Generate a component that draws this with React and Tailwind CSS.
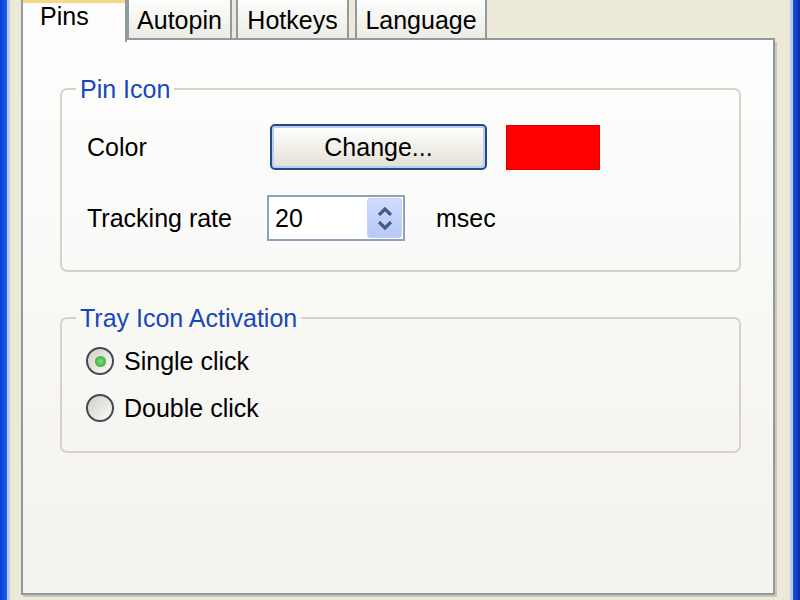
import React, { useState } from "react";

const font = { fontFamily: '"Liberation Sans", Arial, sans-serif' };

const Radio = ({ checked, label, onClick }) => (
    <div className="flex items-center h-[34px] cursor-default" onClick={onClick}>
        <span className="w-[28px] h-[28px] rounded-full border-2 border-[#3f4a55] bg-linear-to-br from-[#cfcec6] to-[#fdfdfb] flex items-center justify-center">
            {checked && <span className="w-[11px] h-[11px] rounded-full bg-radial from-[#7de07a] to-[#1f9b1f]" />}
        </span>
        <span className="ml-[10px] text-[25px] leading-none text-black">{label}</span>
    </div>
);

const App = () => {
    const [mode, setMode] = useState("single");
    const [rate, setRate] = useState(20);

    return (
        <div className="w-[800px] h-[600px] flex bg-[#ece9d8] overflow-hidden" style={font}>
            {/* window frame left */}
            <div className="w-[7px] h-full bg-linear-to-r from-[#0a3ad0] to-[#1660ea]" />
            <div className="w-[3px] h-full bg-[#b7cbf2]" />
            <div className="w-[11px] h-full" />

            {/* tab control */}
            <div className="w-[754px] h-full flex flex-col">
                <div className="h-[40px] flex">
                    <div className="w-[106px] h-[42px] relative z-10 border-x-2 border-[#919b9c] bg-[#fdfdfd] pl-[17px]">
                        <div className="absolute top-0 left-0 right-0 h-[3px] bg-[#f6d889]" />
                        <div className="pt-[2px] text-[25px] leading-[28px] text-black">Pins</div>
                    </div>
                    <div className="flex-1 flex items-end border-b-2 border-[#919b9c] h-[40px]">
                        <div className="w-[105px] h-[38px] border-x-2 border-[#919b9c] bg-linear-to-b from-[#fdfdfc] to-[#ecebe5] flex items-center justify-center pt-[2px] text-[25px] leading-none text-black">Autopin</div>
                        <div className="ml-[4px] w-[113px] h-[38px] border-x-2 border-[#919b9c] bg-linear-to-b from-[#fdfdfc] to-[#ecebe5] flex items-center justify-center pt-[2px] text-[25px] leading-none text-black">Hotkeys</div>
                        <div className="ml-[6px] w-[132px] h-[38px] border-x-2 border-[#919b9c] bg-linear-to-b from-[#fdfdfc] to-[#ecebe5] flex items-center justify-center pt-[2px] text-[25px] leading-none text-black">Language</div>
                    </div>
                </div>

                <div className="h-[555px] border-x-2 border-b-2 border-[#919b9c] shadow-[2px_2px_0_#c9c7ba] bg-linear-to-b from-[#fefefe] to-[#f3f2ec] pt-[34px] pl-[37px] pr-[32px]">
                    {/* Pin Icon */}
                    <fieldset className="border-2 border-[#d6d3c6] rounded-[7px] h-[198px]">
                        <legend className="ml-[14px] px-[4px] text-[25px] leading-[30px] text-[#1848b8]">Pin Icon</legend>
                        <div className="pt-[20px] pl-[25px] flex items-center h-[66px]">
                            <span className="w-[183px] text-[25px] leading-none text-black">Color</span>
                            <button className="w-[217px] h-[46px] rounded-[5px] border-2 border-[#224a86] shadow-[inset_0_0_0_2px_#b9cdee] bg-linear-to-b from-[#ffffff] to-[#e3e1d6] text-[25px] leading-none text-black">
                                Change...
                            </button>
                            <div className="ml-[19px] w-[94px] h-[45px] bg-[#ff0000] border border-[#e00000]" />
                        </div>
                        <div className="mt-[25px] pl-[25px] flex items-center h-[46px]">
                            <span className="w-[180px] text-[25px] leading-none text-black">Tracking rate</span>
                            <div className="w-[138px] h-[46px] border-2 border-[#8ea3bb] bg-white flex items-center pl-[6px] pr-[1px]">
                                <span className="flex-1 text-[25px] leading-none text-black">{rate}</span>
                                <div className="w-[35px] h-[40px] rounded-[3px] border border-[#c3d2f4] bg-linear-to-b from-[#cfdcfb] to-[#b7caf5] flex flex-col items-center justify-center gap-[5px]">
                                    <svg width="16" height="9" viewBox="0 0 16 9" onClick={() => setRate(rate + 1)}>
                                        <polyline points="2,8 8,2 14,8" fill="none" stroke="#45598a" strokeWidth="3.2" />
                                    </svg>
                                    <svg width="16" height="9" viewBox="0 0 16 9" onClick={() => setRate(Math.max(0, rate - 1))}>
                                        <polyline points="2,1 8,7 14,1" fill="none" stroke="#45598a" strokeWidth="3.2" />
                                    </svg>
                                </div>
                            </div>
                            <span className="ml-[31px] text-[25px] leading-none text-black">msec</span>
                        </div>
                    </fieldset>

                    {/* Tray Icon Activation */}
                    <fieldset className="mt-[31px] border-2 border-[#d6d3c6] rounded-[7px] h-[150px]">
                        <legend className="ml-[14px] px-[4px] text-[25px] leading-[30px] text-[#1848b8]">Tray Icon Activation</legend>
                        <div className="pt-[11px] pl-[24px] flex flex-col gap-[13px]">
                            <Radio label="Single click" checked={mode === "single"} onClick={() => setMode("single")} />
                            <Radio label="Double click" checked={mode === "double"} onClick={() => setMode("double")} />
                        </div>
                    </fieldset>
                </div>
            </div>

            {/* window frame right */}
            <div className="w-[15px] h-full" />
            <div className="w-[3px] h-full bg-[#b7cbf2]" />
            <div className="w-[7px] h-full bg-linear-to-r from-[#1a4fe0] to-[#0a2aa8]" />
        </div>
    );
};

export default App;
